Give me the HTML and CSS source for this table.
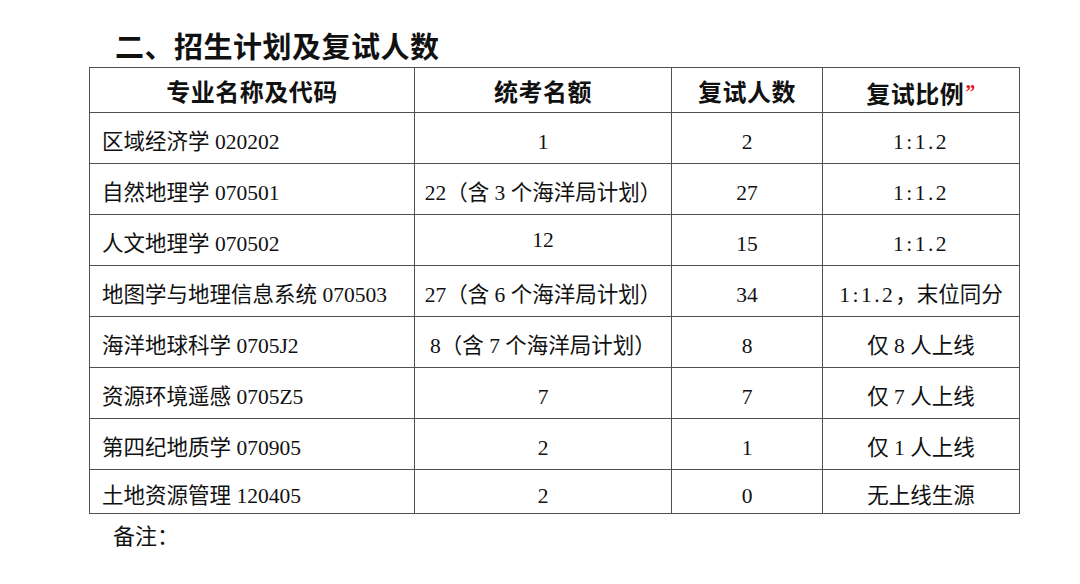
FILE: index.html
```html
<!DOCTYPE html>
<html lang="zh-CN">
<head>
<meta charset="utf-8">
<title>招生计划及复试人数</title>
<link rel="stylesheet" href="styles.css">
</head>
<body>
<div class="page">
  <h2 class="title">二、招生计划及复试人数</h2>
  <table class="plan">
    <colgroup>
      <col class="c1"><col class="c2"><col class="c3"><col class="c4">
    </colgroup>
    <thead>
      <tr>
        <th>专业名称及代码</th>
        <th>统考名额</th>
        <th>复试人数</th>
        <th>复试比例<span class="mark">”</span></th>
      </tr>
    </thead>
    <tbody>
      <tr><td class="name">区域经济学 020202</td><td>1</td><td>2</td><td><span class="m">1:1.2</span></td></tr>
      <tr><td class="name">自然地理学 070501</td><td>22（含 3 个海洋局计划）</td><td>27</td><td><span class="m">1:1.2</span></td></tr>
      <tr><td class="name">人文地理学 070502</td><td class="up">12</td><td>15</td><td><span class="m">1:1.2</span></td></tr>
      <tr><td class="name">地图学与地理信息系统 070503</td><td>27（含 6 个海洋局计划）</td><td>34</td><td><span class="m">1:1.2</span>，末位同分</td></tr>
      <tr><td class="name">海洋地球科学 0705J2</td><td>8（含 7 个海洋局计划）</td><td>8</td><td>仅 8 人上线</td></tr>
      <tr><td class="name">资源环境遥感 0705Z5</td><td>7</td><td>7</td><td>仅 7 人上线</td></tr>
      <tr><td class="name">第四纪地质学 070905</td><td>2</td><td>1</td><td>仅 1 人上线</td></tr>
      <tr class="last"><td class="name">土地资源管理 120405</td><td>2</td><td>0</td><td>无上线生源</td></tr>
    </tbody>
  </table>
  <p class="note">备注：</p>
</div>
</body>
</html>
```

FILE: styles.css
```css
html, body {
  margin: 0;
  padding: 0;
  background: #ffffff;
}
body {
  font-family: "Liberation Serif", "Noto Sans CJK SC", serif;
  color: #111;
}
.page {
  width: 1080px;
  height: 584px;
  overflow: hidden;
}
.title {
  margin: 31px 0 2px 115px;
  font-size: 29px;
  line-height: 34px;
  font-weight: 700;
  color: #111;
  letter-spacing: 0.5px;
}
.plan {
  margin-left: 89px;
  width: 930px;
  border-collapse: collapse;
  table-layout: fixed;
  font-size: 21.5px;
}
.c1 { width: 325px; }
.c2 { width: 257px; }
.c3 { width: 151px; }
.c4 { width: 197px; }
.plan th, .plan td {
  border: 1px solid #505050;
  text-align: center;
  vertical-align: middle;
  padding: 0;
  white-space: nowrap;
}
.plan thead tr { height: 45px; }
.plan th {
  font-size: 24px;
  font-weight: 700;
  padding-top: 6px;
  line-height: 30px;
  letter-spacing: 0.5px;
}
.plan tbody tr { height: 51px; }
.plan tbody tr.last { height: 44px; }
.plan td {
  padding-top: 8px;
  line-height: 26px;
}
.plan tr.last td { padding-top: 9px; }
.plan td.name {
  text-align: left;
  padding-left: 12px;
}
.plan td.up { padding-top: 0; }
.m {
  font-family: "Liberation Serif", serif;
  font-size: 21.5px;
  letter-spacing: 2.5px;
}
.mark {
  font-family: "Liberation Serif", serif;
  color: #e31b1b;
  font-size: 20px;
  font-weight: 700;
  vertical-align: 4px;
  margin-left: 1px;
}
.note {
  margin: 10px 0 0 113px;
  font-size: 22px;
  line-height: 26px;
}
```
